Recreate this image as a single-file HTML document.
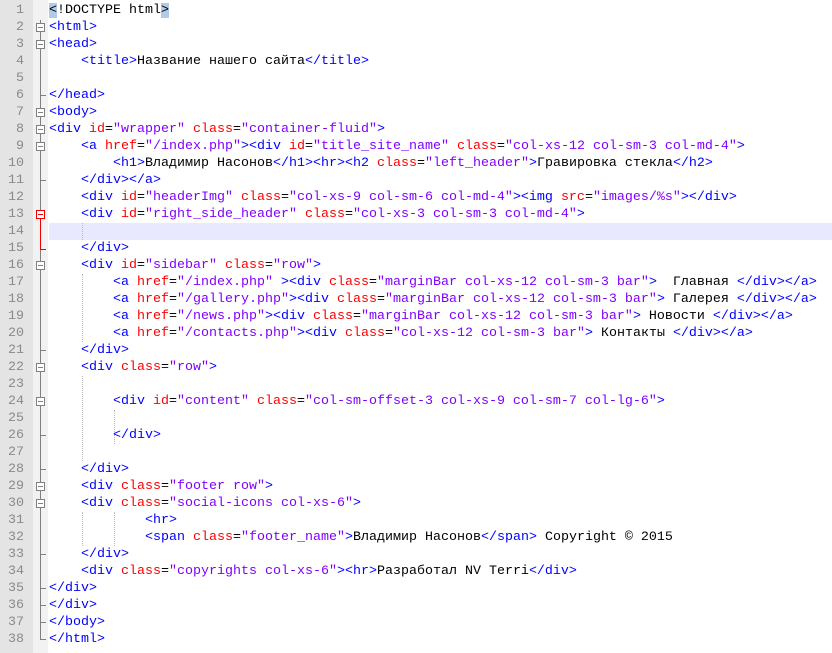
<!DOCTYPE html>
<html><head><style>
body{margin:0;width:832px;height:653px;background:#fff;overflow:hidden;position:relative;font-family:"Liberation Mono",monospace;font-size:13.33px}
#num{position:absolute;left:0;top:0;width:33px;height:653px;background:#e4e4e4}
#fold{position:absolute;left:33px;top:0;width:15px;height:653px;background:#f2f2f2}
.ln{position:absolute;left:0;width:24px;text-align:right;color:#8a8a8a;height:17px;line-height:17px}
pre{position:absolute;left:49px;top:2px;margin:0;font:inherit;line-height:17px;color:#000}
.t{color:#0000ff}.a{color:#ff0000}.v{color:#8000ff}
.bm{background:#b0cbe6}
#cur{position:absolute;left:49px;top:223px;width:783px;height:17px;background:#e8e8ff}
.box{position:absolute;left:36px;width:9px;height:9px;border:1px solid #808080;background:#fff;box-sizing:border-box}
.box:after{content:"";position:absolute;left:1px;top:3px;width:5px;height:1px;background:#808080}
.red{border-color:#e00}.red:after{background:#e00}
.vl{position:absolute;left:40px;width:1px;background:#808080}
.tk{position:absolute;left:40px;width:6px;height:1px;background:#808080}
.dot{position:absolute;width:0;border-left:1px dotted #bbb}
</style></head><body>
<div id="num"></div><div id="fold"></div><div id="cur"></div>
<div class="vl" style="top:20px;height:619px"></div>
<div class="vl" style="top:219px;height:31px;background:#e00"></div>
<div class="tk" style="top:95px"></div>
<div class="tk" style="top:180px"></div>
<div class="tk" style="top:249px;background:#e00"></div>
<div class="tk" style="top:350px"></div>
<div class="tk" style="top:435px"></div>
<div class="tk" style="top:469px"></div>
<div class="tk" style="top:554px"></div>
<div class="tk" style="top:588px"></div>
<div class="tk" style="top:605px"></div>
<div class="tk" style="top:622px"></div>
<div class="tk" style="top:639px"></div>
<div class="box" style="top:23px"></div>
<div class="box" style="top:40px"></div>
<div class="box" style="top:108px"></div>
<div class="box" style="top:125px"></div>
<div class="box" style="top:142px"></div>
<div class="box red" style="top:210px"></div>
<div class="box" style="top:261px"></div>
<div class="box" style="top:363px"></div>
<div class="box" style="top:397px"></div>
<div class="box" style="top:482px"></div>
<div class="box" style="top:499px"></div>
<div class="dot" style="left:82px;top:223px;height:17px"></div>
<div class="dot" style="left:82px;top:274px;height:68px"></div>
<div class="dot" style="left:82px;top:376px;height:85px"></div>
<div class="dot" style="left:114px;top:410px;height:34px"></div>
<div class="dot" style="left:82px;top:512px;height:34px"></div>
<div class="dot" style="left:114px;top:512px;height:34px"></div>
<div id="nums"></div>
<script>
var h='';for(var i=1;i<=38;i++){h+='<div class="ln" style="top:'+(2+(i-1)*17)+'px">'+i+'</div>';}document.getElementById('nums').innerHTML=h;
</script>
<pre><span class="bm">&lt;</span>!DOCTYPE html<span class="bm">&gt;</span>
<span class="t">&lt;html&gt;</span>
<span class="t">&lt;head&gt;</span>
    <span class="t">&lt;title&gt;</span>Название нашего сайта<span class="t">&lt;/title&gt;</span>

<span class="t">&lt;/head&gt;</span>
<span class="t">&lt;body&gt;</span>
<span class="t">&lt;div</span> <span class="a">id</span>=<span class="v">"wrapper"</span> <span class="a">class</span>=<span class="v">"container-fluid"</span><span class="t">&gt;</span>
    <span class="t">&lt;a</span> <span class="a">href</span>=<span class="v">"/index.php"</span><span class="t">&gt;&lt;div</span> <span class="a">id</span>=<span class="v">"title_site_name"</span> <span class="a">class</span>=<span class="v">"col-xs-12 col-sm-3 col-md-4"</span><span class="t">&gt;</span>
        <span class="t">&lt;h1&gt;</span>Владимир Насонов<span class="t">&lt;/h1&gt;&lt;hr&gt;&lt;h2</span> <span class="a">class</span>=<span class="v">"left_header"</span><span class="t">&gt;</span>Гравировка стекла<span class="t">&lt;/h2&gt;</span>
    <span class="t">&lt;/div&gt;&lt;/a&gt;</span>
    <span class="t">&lt;div</span> <span class="a">id</span>=<span class="v">"headerImg"</span> <span class="a">class</span>=<span class="v">"col-xs-9 col-sm-6 col-md-4"</span><span class="t">&gt;&lt;img</span> <span class="a">src</span>=<span class="v">"images/%s"</span><span class="t">&gt;&lt;/div&gt;</span>
    <span class="t">&lt;div</span> <span class="a">id</span>=<span class="v">"right_side_header"</span> <span class="a">class</span>=<span class="v">"col-xs-3 col-sm-3 col-md-4"</span><span class="t">&gt;</span>

    <span class="t">&lt;/div&gt;</span>
    <span class="t">&lt;div</span> <span class="a">id</span>=<span class="v">"sidebar"</span> <span class="a">class</span>=<span class="v">"row"</span><span class="t">&gt;</span>
        <span class="t">&lt;a</span> <span class="a">href</span>=<span class="v">"/index.php"</span> <span class="t">&gt;&lt;div</span> <span class="a">class</span>=<span class="v">"marginBar col-xs-12 col-sm-3 bar"</span><span class="t">&gt;</span>  Главная <span class="t">&lt;/div&gt;&lt;/a&gt;</span>
        <span class="t">&lt;a</span> <span class="a">href</span>=<span class="v">"/gallery.php"</span><span class="t">&gt;&lt;div</span> <span class="a">class</span>=<span class="v">"marginBar col-xs-12 col-sm-3 bar"</span><span class="t">&gt;</span> Галерея <span class="t">&lt;/div&gt;&lt;/a&gt;</span>
        <span class="t">&lt;a</span> <span class="a">href</span>=<span class="v">"/news.php"</span><span class="t">&gt;&lt;div</span> <span class="a">class</span>=<span class="v">"marginBar col-xs-12 col-sm-3 bar"</span><span class="t">&gt;</span> Новости <span class="t">&lt;/div&gt;&lt;/a&gt;</span>
        <span class="t">&lt;a</span> <span class="a">href</span>=<span class="v">"/contacts.php"</span><span class="t">&gt;&lt;div</span> <span class="a">class</span>=<span class="v">"col-xs-12 col-sm-3 bar"</span><span class="t">&gt;</span> Контакты <span class="t">&lt;/div&gt;&lt;/a&gt;</span>
    <span class="t">&lt;/div&gt;</span>
    <span class="t">&lt;div</span> <span class="a">class</span>=<span class="v">"row"</span><span class="t">&gt;</span>

        <span class="t">&lt;div</span> <span class="a">id</span>=<span class="v">"content"</span> <span class="a">class</span>=<span class="v">"col-sm-offset-3 col-xs-9 col-sm-7 col-lg-6"</span><span class="t">&gt;</span>

        <span class="t">&lt;/div&gt;</span>

    <span class="t">&lt;/div&gt;</span>
    <span class="t">&lt;div</span> <span class="a">class</span>=<span class="v">"footer row"</span><span class="t">&gt;</span>
    <span class="t">&lt;div</span> <span class="a">class</span>=<span class="v">"social-icons col-xs-6"</span><span class="t">&gt;</span>
            <span class="t">&lt;hr&gt;</span>
            <span class="t">&lt;span</span> <span class="a">class</span>=<span class="v">"footer_name"</span><span class="t">&gt;</span>Владимир Насонов<span class="t">&lt;/span&gt;</span> Copyright © 2015
    <span class="t">&lt;/div&gt;</span>
    <span class="t">&lt;div</span> <span class="a">class</span>=<span class="v">"copyrights col-xs-6"</span><span class="t">&gt;&lt;hr&gt;</span>Разработал NV Terri<span class="t">&lt;/div&gt;</span>
<span class="t">&lt;/div&gt;</span>
<span class="t">&lt;/div&gt;</span>
<span class="t">&lt;/body&gt;</span>
<span class="t">&lt;/html&gt;</span></pre>
</body></html>
